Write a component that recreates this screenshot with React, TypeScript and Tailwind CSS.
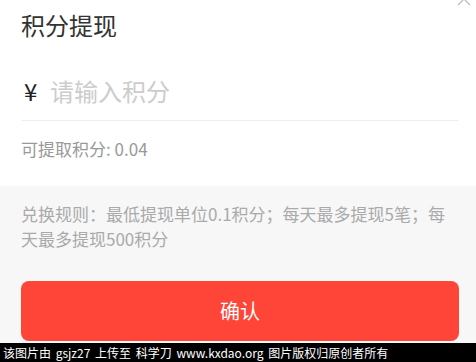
// Points withdrawal sheet
const font = { fontFamily: '"Noto Sans CJK SC", "Noto Sans", sans-serif' };

export default function App() {
  return (
    <div
      className="relative w-[476px] h-[362px] overflow-hidden bg-white"
      style={font}
    >
      {/* collapse caret, cut off at the top edge */}
      <svg
        className="absolute left-[457px] top-[-5px] w-[14px] h-[12px]"
        viewBox="0 0 14 12"
        fill="none"
        stroke="#bbbbbb"
        strokeWidth="1.2"
      >
        <path d="M1 10L7 4l6 6" />
      </svg>

      {/* white form area */}
      <div className="pl-[21px] pr-[17px] pt-[10px] pb-[25px]">
        <h1 className="text-[24px] leading-[30px] text-[#333333] font-normal">积分提现</h1>

        <div className="pt-[26px] pb-[4px] border-b border-[#eeeeee] flex items-center">
          <span className="text-[24px] leading-[50px] text-[#222222] pl-[3px] w-[29px]">¥</span>
          <span className="text-[24px] leading-[50px] text-[#cccccc]">请输入积分</span>
        </div>

        <p className="pt-[16px] text-[17px] leading-[24px] text-[#999999]">可提取积分: 0.04</p>
      </div>

      {/* grey rules area */}
      <div className="bg-[#f7f7f7] pl-[21px] pr-[17px] pt-[15px] h-[176px]">
        <p className="text-[17px] leading-[25px] text-[#aaaaaa]">
          兑换规则：最低提现单位0.1积分；每天最多提现5笔；每天最多提现500积分
        </p>

        <button className="mt-[30px] w-full h-[60px] rounded-[8px] bg-[#ff4538] text-white text-[20px] font-normal flex items-center justify-center">
          确认
        </button>
      </div>

      {/* watermark strip */}
      <div className="absolute left-0 bottom-0 w-full h-[19px] bg-black text-white text-[12px] leading-[19px] pl-[3px] whitespace-pre [word-spacing:2px]">
        该图片由 gsjz27 上传至 科学刀 www.kxdao.org 图片版权归原创者所有
      </div>
    </div>
  );
}
